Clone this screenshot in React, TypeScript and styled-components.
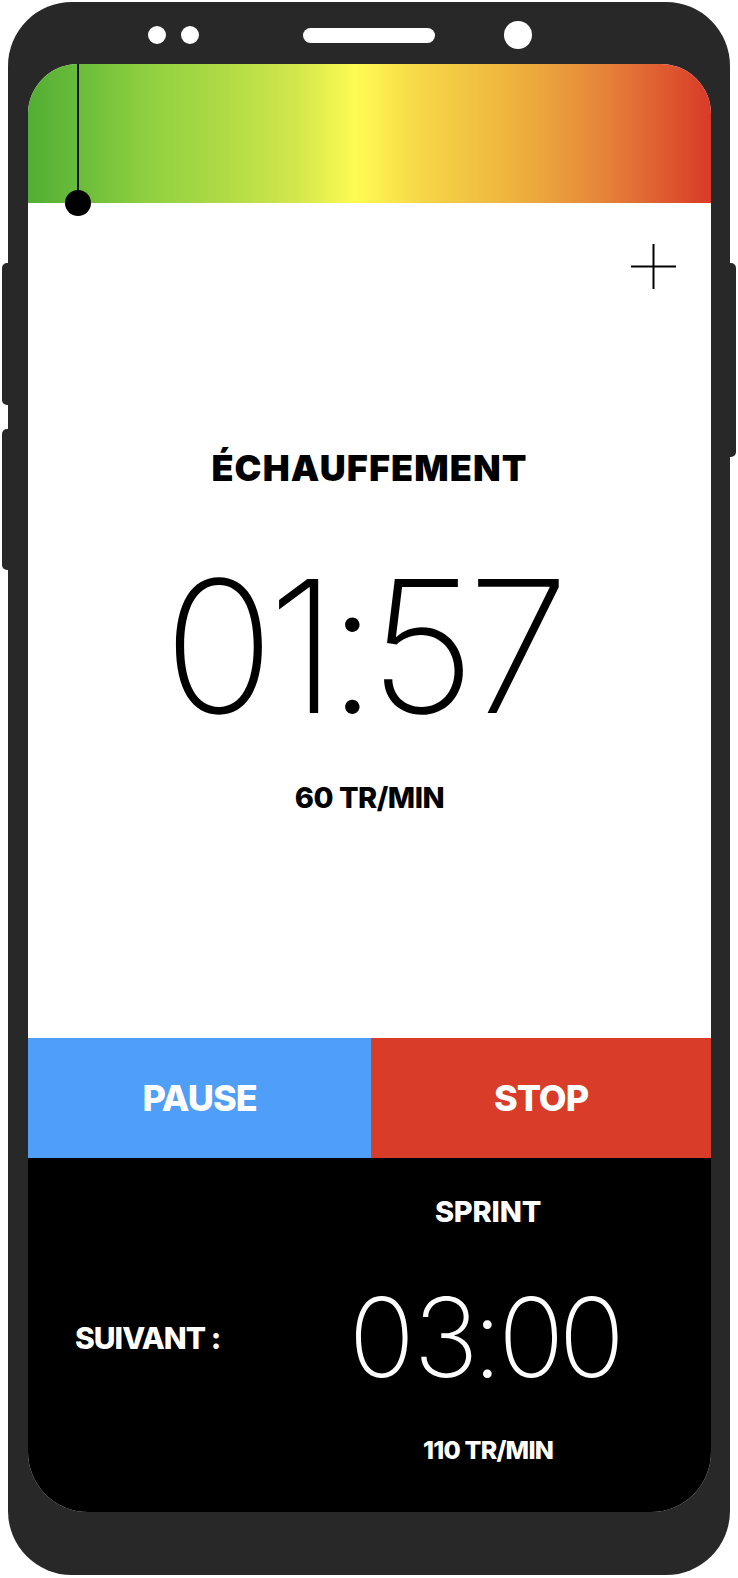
import React from "react";
import styled, { createGlobalStyle } from "styled-components";

const GlobalStyle = createGlobalStyle`
  html, body {
    margin: 0;
    padding: 0;
    background: #ffffff;
  }
  body {
    font-family: Inter, "Liberation Sans", Arial, sans-serif;
  }
  * { box-sizing: border-box; }
`;

const Page = styled.div`
  width: 738px;
  height: 1578px;
  padding: 2px 0 0 8px;
  background: #ffffff;
`;

const Phone = styled.div`
  position: relative;
  width: 722px;
  height: 1573px;
  border-radius: 64px;
  background: #282828;
  padding: 0 19px 0 20px;
  display: flex;
  flex-direction: column;
`;

const SideKey = styled.div<{ $side: "left" | "right"; $top: number; $height: number }>`
  position: absolute;
  top: ${(p) => p.$top}px;
  height: ${(p) => p.$height}px;
  width: 12px;
  background: #282828;
  border-radius: 5px;
  ${(p) => (p.$side === "left" ? "left: -6px;" : "right: -6px;")}
`;

const Bezel = styled.div`
  height: 62px;
  padding: 4px 0 0 120px;
  display: flex;
  align-items: center;
`;

const Sensor = styled.span<{ $gap?: number }>`
  width: 18px;
  height: 18px;
  border-radius: 50%;
  background: #ffffff;
  margin-right: ${(p) => p.$gap ?? 0}px;
`;

const Speaker = styled.span`
  width: 132px;
  height: 15px;
  border-radius: 8px;
  background: #ffffff;
  margin-right: 69px;
`;

const Camera = styled.span`
  width: 28px;
  height: 28px;
  border-radius: 50%;
  background: #ffffff;
`;

const Screen = styled.div`
  width: 683px;
  height: 1448px;
  border-radius: 50px 50px 60px 60px;
  overflow: hidden;
  background: #ffffff;
  display: flex;
  flex-direction: column;
`;

const HeatBar = styled.div`
  position: relative;
  height: 139px;
  flex: none;
  background: linear-gradient(
    90deg,
    #52ae34 0%,
    #6cbd3a 8%,
    #8ecf40 17%,
    #b3dc46 30%,
    #d5e84d 40%,
    #fffb52 48%,
    #f6d547 58%,
    #eeb33e 71%,
    #e6853a 84%,
    #d93a28 100%
  );
`;

const Marker = styled.div`
  position: absolute;
  left: 37px;
  top: 0;
  width: 26px;
  height: 152px;
  display: flex;
  flex-direction: column;
  align-items: center;
  z-index: 2;
`;

const MarkerLine = styled.span`
  flex: 1;
  width: 2px;
  background: #111111;
`;

const MarkerDot = styled.span`
  width: 26px;
  height: 26px;
  flex: none;
  border-radius: 50%;
  background: #000000;
`;

const Main = styled.div`
  position: relative;
  flex: 1;
  display: flex;
  flex-direction: column;
  align-items: center;
  padding-top: 247px;
  color: #000000;
`;

const AddButton = styled.button`
  position: absolute;
  top: 41px;
  right: 35px;
  width: 45px;
  height: 45px;
  padding: 0;
  border: 0;
  background: transparent;
  cursor: pointer;
  display: block;
`;

const Label = styled.div<{ $size: number; $spacing?: number; $color?: string; $weight?: number }>`
  font-family: Inter, "Liberation Sans", Arial, sans-serif;
  font-weight: ${(p) => p.$weight ?? 800};
  font-size: ${(p) => p.$size}px;
  line-height: 1;
  letter-spacing: ${(p) => p.$spacing ?? 0}px;
  color: ${(p) => p.$color ?? "#000000"};
  white-space: nowrap;
`;

const Clock = styled.div<{ $size: number; $color: string }>`
  font-family: Inter, "Liberation Sans", Arial, sans-serif;
  font-weight: 200;
  font-size: ${(p) => p.$size}px;
  line-height: 1;
  color: ${(p) => p.$color};
  white-space: nowrap;
`;

/* one character of a clock face, with its own tracking */
const Glyph = styled.span<{ $track: number; $narrow?: boolean }>`
  letter-spacing: ${(p) => p.$track}em;
  font-variant-numeric: ${(p) => (p.$narrow ? "proportional-nums" : "tabular-nums")};
`;

const Title = styled(Label)`
  margin-bottom: 68px;
`;

const MainClock = styled(Clock)`
  margin-bottom: 45px;
`;

const Controls = styled.div`
  height: 120px;
  flex: none;
  display: grid;
  grid-template-columns: 343px 1fr;
`;

const ControlButton = styled.button<{ $bg: string }>`
  border: 0;
  margin: 0;
  padding: 0;
  background: ${(p) => p.$bg};
  display: flex;
  align-items: center;
  justify-content: center;
  cursor: pointer;
`;

const NextPanel = styled.div`
  height: 354px;
  flex: none;
  background: #000000;
  display: grid;
  grid-template-columns: 237px 1fr;
`;

const NextLabel = styled.div`
  padding: 165px 0 0 47px;
`;

const NextInfo = styled.div`
  display: flex;
  flex-direction: column;
  align-items: center;
  padding-top: 39px;
`;

const NextName = styled(Label)`
  margin-bottom: 56px;
`;

const NextClock = styled(Clock)`
  margin-bottom: 46px;
`;

function ClockFace({ value, tracks }: { value: string; tracks: number[] }) {
  return (
    <>
      {value.split("").map((ch, i) => (
        <Glyph key={i} $track={tracks[i] ?? 0} $narrow={ch === "1"}>
          {ch}
        </Glyph>
      ))}
    </>
  );
}

function PlusIcon() {
  return (
    <svg width="45" height="45" viewBox="0 0 45 45" aria-hidden="true">
      <line x1="22.5" y1="0" x2="22.5" y2="45" stroke="#000" strokeWidth="2" />
      <line x1="0" y1="22.5" x2="45" y2="22.5" stroke="#000" strokeWidth="2" />
    </svg>
  );
}

export default function App() {
  return (
    <Page>
      <GlobalStyle />
      <Phone>
        <SideKey $side="left" $top={261} $height={142} />
        <SideKey $side="left" $top={427} $height={141} />
        <SideKey $side="right" $top={261} $height={194} />
        <Bezel>
          <Sensor $gap={15} />
          <Sensor $gap={104} />
          <Speaker />
          <Camera />
        </Bezel>
        <Screen>
          <HeatBar>
            <Marker>
              <MarkerLine />
              <MarkerDot />
            </Marker>
          </HeatBar>
          <Main>
            <AddButton aria-label="Ajouter">
              <PlusIcon />
            </AddButton>
            <Title $size={36} $spacing={1.1} $weight={900}>ÉCHAUFFEMENT</Title>
            <MainClock $size={184} $color="#000000">
              <ClockFace value="01:57" tracks={[-0.059, -0.054, -0.071, -0.13, 0.009]} />
            </MainClock>
            <Label $size={29} $spacing={-0.5}>60 TR/MIN</Label>
          </Main>
          <Controls>
            <ControlButton $bg="#4f9ef8">
              <Label $size={36} $spacing={-1} $color="#ffffff">PAUSE</Label>
            </ControlButton>
            <ControlButton $bg="#d93c28">
              <Label $size={36} $spacing={-1} $color="#ffffff">STOP</Label>
            </ControlButton>
          </Controls>
          <NextPanel>
            <NextLabel>
              <Label $size={30} $spacing={-1} $color="#ffffff">SUIVANT :</Label>
            </NextLabel>
            <NextInfo>
              <NextName $size={29} $spacing={-0.2} $color="#ffffff">SPRINT</NextName>
              <NextClock $size={110} $color="#ffffff">
                <ClockFace value="03:00" tracks={[-0.0545, -0.091, -0.056, -0.097, 0.023]} />
              </NextClock>
              <Label $size={25} $spacing={-0.8} $color="#ffffff">110 TR/MIN</Label>
            </NextInfo>
          </NextPanel>
        </Screen>
      </Phone>
    </Page>
  );
}
